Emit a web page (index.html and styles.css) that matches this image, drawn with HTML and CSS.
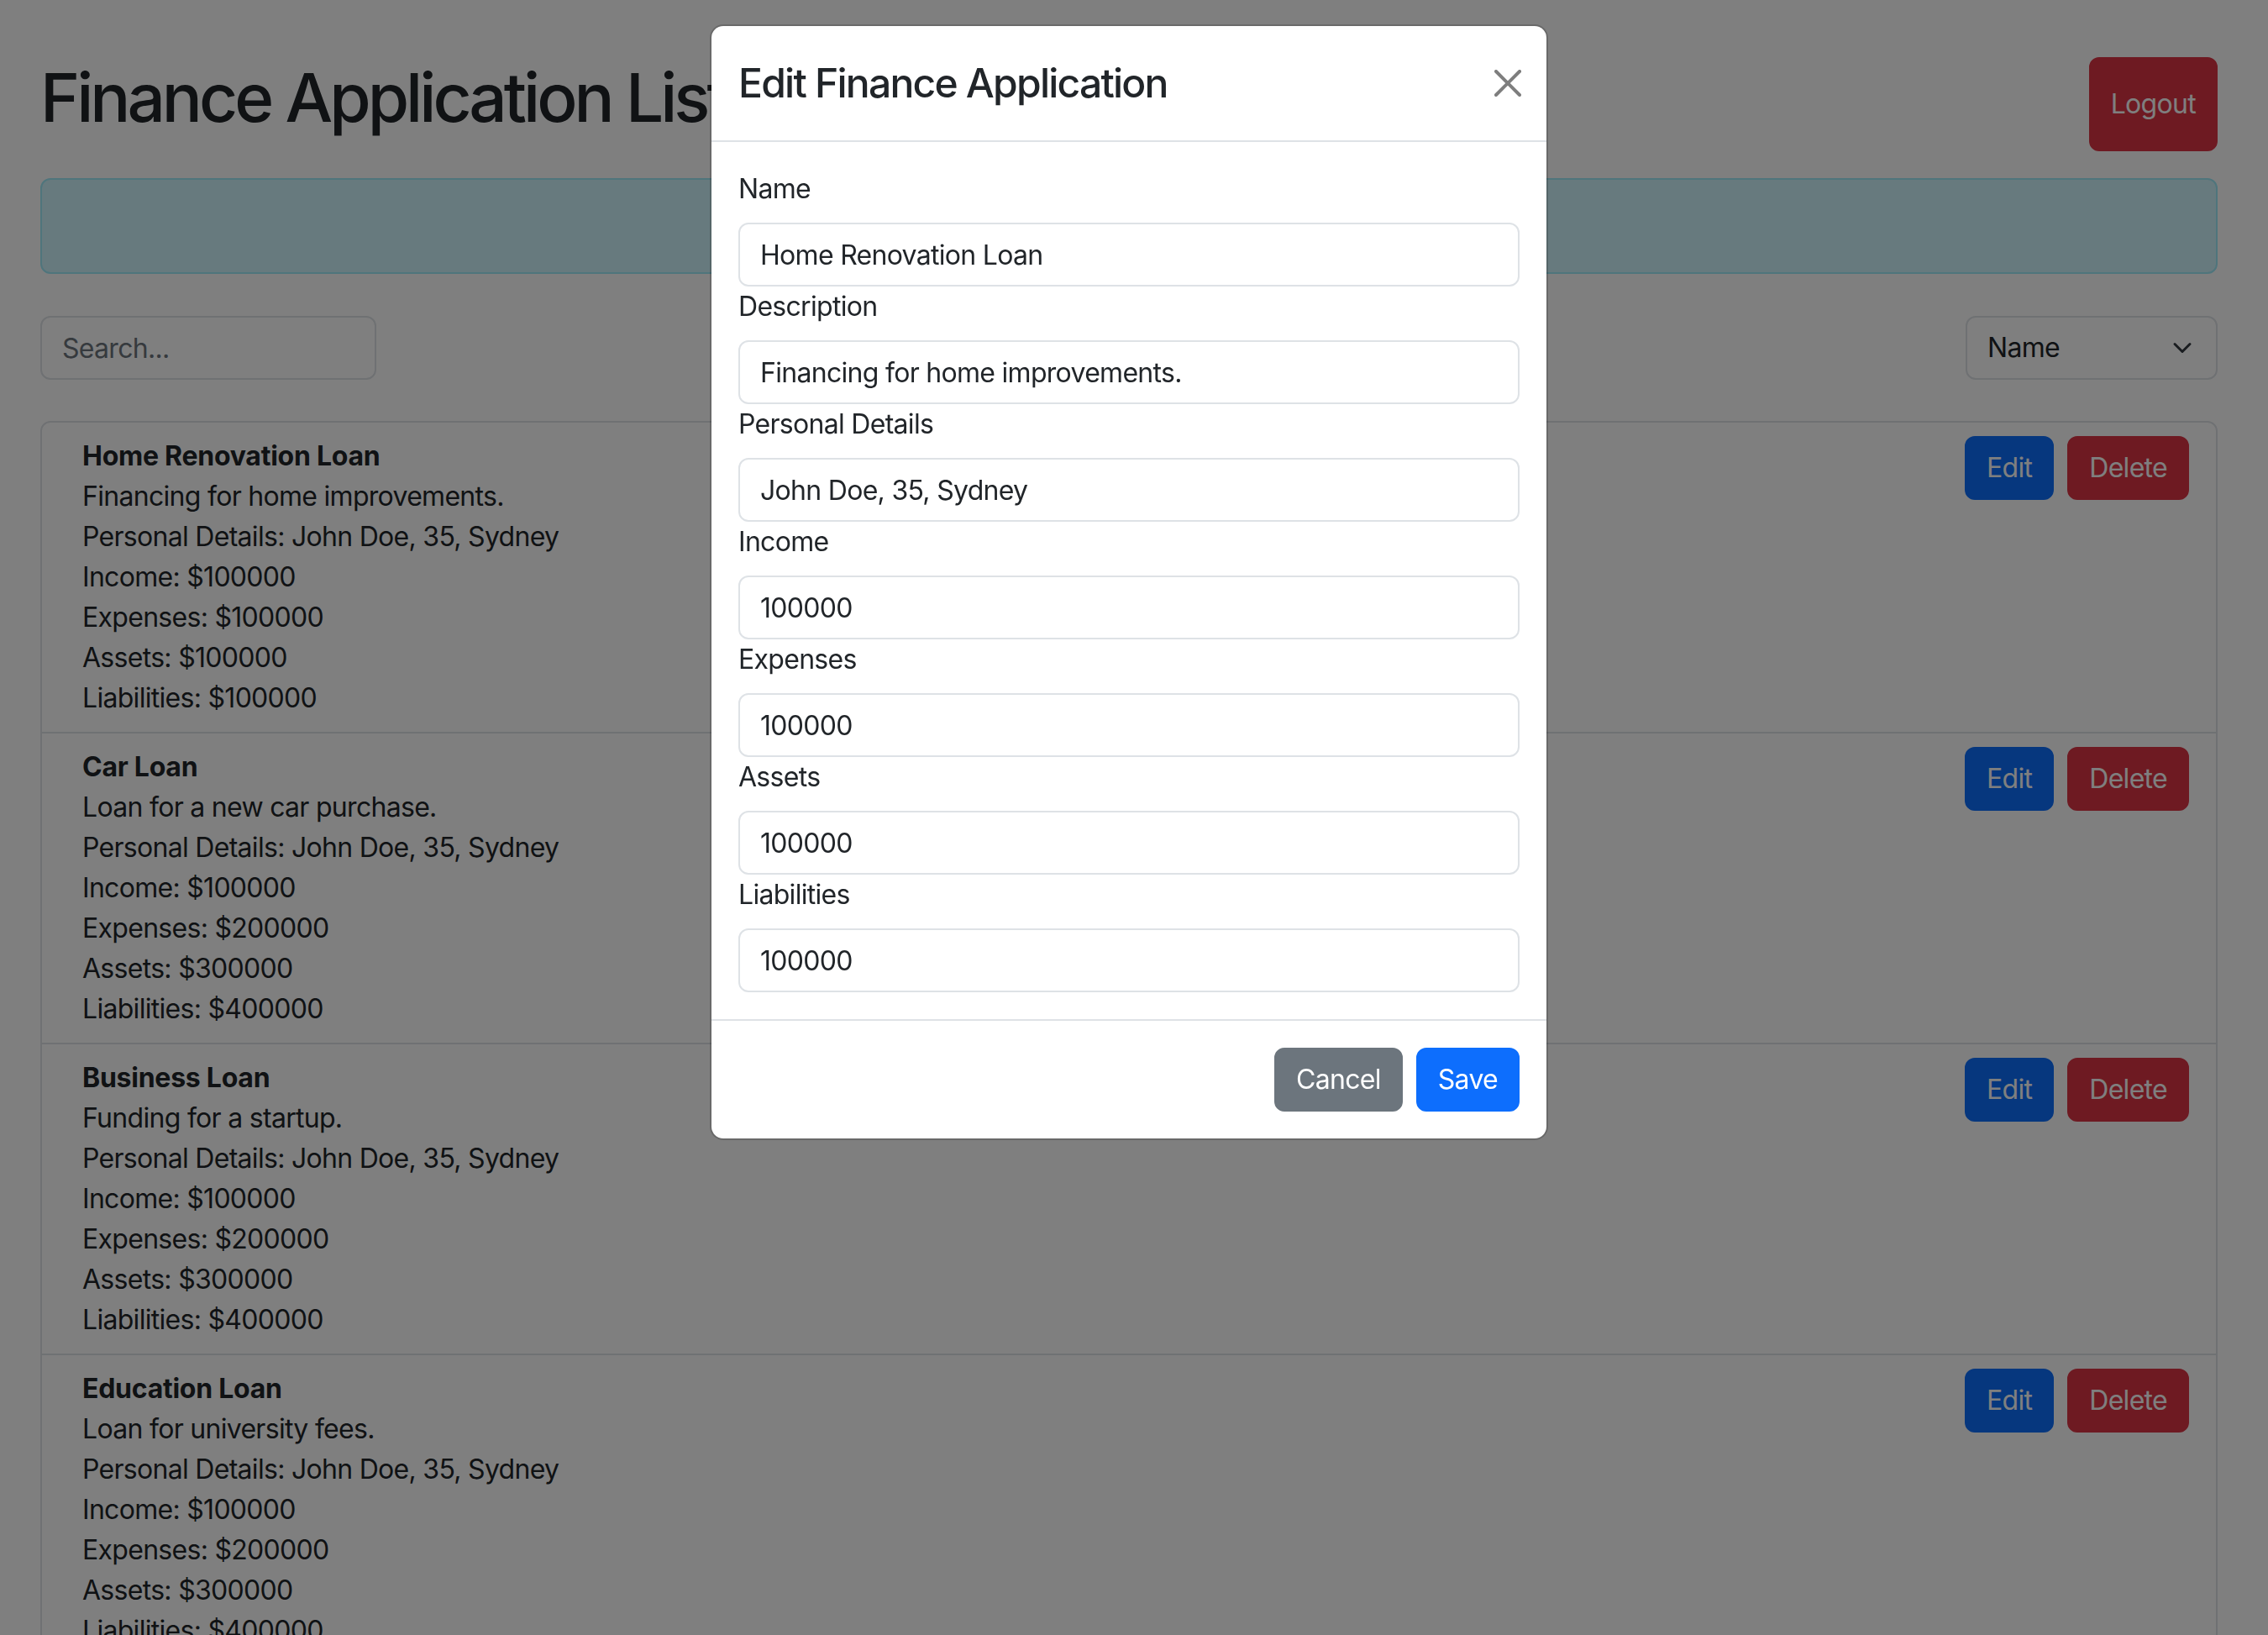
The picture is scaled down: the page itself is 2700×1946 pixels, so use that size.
FILE: index.html
```html
<!DOCTYPE html>
<html lang="en">
<head>
<meta charset="utf-8">
<title>Finance Application List</title>
<link rel="stylesheet" href="styles.css">
</head>
<body class="modal-open">
  <div class="page">
    <header class="topbar">
      <h1 class="page-title">Finance Application List</h1>
      <button class="btn btn-danger">Logout</button>
    </header>

    <div class="alert" role="alert"></div>

    <div class="toolbar">
      <input class="field search" type="text" placeholder="Search...">
      <div class="select-wrap">
        <select class="field select"><option>Name</option></select>
        <svg class="chevron" viewBox="0 0 16 16" width="32" height="24" aria-hidden="true"><path fill="none" stroke="#343a40" stroke-linecap="round" stroke-linejoin="round" stroke-width="2" d="m2 5 6 6 6-6"/></svg>
      </div>
    </div>

    <ul class="list">
      <li class="item">
        <div class="item-body">
          <div class="item-title">Home Renovation Loan</div>
          <div>Financing for home improvements.</div>
          <div>Personal Details: John Doe, 35, Sydney</div>
          <div>Income: $100000</div>
          <div>Expenses: $100000</div>
          <div>Assets: $100000</div>
          <div>Liabilities: $100000</div>
        </div>
        <div class="actions">
          <button class="btn btn-primary">Edit</button>
          <button class="btn btn-danger">Delete</button>
        </div>
      </li>
      <li class="item">
        <div class="item-body">
          <div class="item-title">Car Loan</div>
          <div>Loan for a new car purchase.</div>
          <div>Personal Details: John Doe, 35, Sydney</div>
          <div>Income: $100000</div>
          <div>Expenses: $200000</div>
          <div>Assets: $300000</div>
          <div>Liabilities: $400000</div>
        </div>
        <div class="actions">
          <button class="btn btn-primary">Edit</button>
          <button class="btn btn-danger">Delete</button>
        </div>
      </li>
      <li class="item">
        <div class="item-body">
          <div class="item-title">Business Loan</div>
          <div>Funding for a startup.</div>
          <div>Personal Details: John Doe, 35, Sydney</div>
          <div>Income: $100000</div>
          <div>Expenses: $200000</div>
          <div>Assets: $300000</div>
          <div>Liabilities: $400000</div>
        </div>
        <div class="actions">
          <button class="btn btn-primary">Edit</button>
          <button class="btn btn-danger">Delete</button>
        </div>
      </li>
      <li class="item">
        <div class="item-body">
          <div class="item-title">Education Loan</div>
          <div>Loan for university fees.</div>
          <div>Personal Details: John Doe, 35, Sydney</div>
          <div>Income: $100000</div>
          <div>Expenses: $200000</div>
          <div>Assets: $300000</div>
          <div>Liabilities: $400000</div>
        </div>
        <div class="actions">
          <button class="btn btn-primary">Edit</button>
          <button class="btn btn-danger">Delete</button>
        </div>
      </li>
    </ul>
  </div>

  <div class="backdrop"></div>

  <div class="modal" role="dialog" aria-modal="true">
    <div class="dialog">
      <div class="m-header">
        <h4 class="m-title">Edit Finance Application</h4>
        <button class="close" aria-label="Close">
          <svg viewBox="0 0 16 16" width="32" height="32" aria-hidden="true"><path fill="#000" d="M.293.293a1 1 0 0 1 1.414 0L8 6.586 14.293.293a1 1 0 1 1 1.414 1.414L9.414 8l6.293 6.293a1 1 0 0 1-1.414 1.414L8 9.414l-6.293 6.293a1 1 0 0 1-1.414-1.414L6.586 8 .293 1.707a1 1 0 0 1 0-1.414z"/></svg>
        </button>
      </div>
      <div class="m-body">
        <label class="label">Name</label>
        <input class="field" type="text" value="Home Renovation Loan">
        <label class="label">Description</label>
        <input class="field" type="text" value="Financing for home improvements.">
        <label class="label">Personal Details</label>
        <input class="field" type="text" value="John Doe, 35, Sydney">
        <label class="label">Income</label>
        <input class="field" type="text" value="100000">
        <label class="label">Expenses</label>
        <input class="field" type="text" value="100000">
        <label class="label">Assets</label>
        <input class="field" type="text" value="100000">
        <label class="label">Liabilities</label>
        <input class="field" type="text" value="100000">
      </div>
      <div class="m-footer">
        <button class="btn btn-secondary">Cancel</button>
        <button class="btn btn-primary">Save</button>
      </div>
    </div>
  </div>
</body>
</html>
```

FILE: styles.css
```css
* { box-sizing: border-box; }

html, body { height: 100%; }

body {
  margin: 0;
  padding-right: 12px;
  overflow: hidden;
  background: #fff;
  color: #212529;
  font-family: Inter, "Noto Sans", "Liberation Sans", sans-serif;
  font-size: 32px;
  line-height: 48px;
  letter-spacing: -0.022em;
}

.page {
  max-width: 2640px;
  margin: 0 auto;
  padding: 68px 24px 0;
}

.topbar {
  display: flex;
  justify-content: space-between;
  align-items: stretch;
  margin-bottom: 32px;
}

.page-title {
  margin: 0 0 16px;
  font-size: 80px;
  font-weight: 500;
  line-height: 96px;
  letter-spacing: -0.05em;
  white-space: nowrap;
}

.btn {
  font-family: inherit;
  font-size: 32px;
  line-height: 48px;
  font-weight: 400;
  letter-spacing: -0.022em;
  padding: 12px 24px;
  border: 2px solid transparent;
  border-radius: 12px;
  color: #fff;
  cursor: pointer;
}

.btn-danger { background: #dc3545; border-color: #dc3545; }
.btn-primary { background: #0d6efd; border-color: #0d6efd; }
.btn-secondary { background: #6c757d; border-color: #6c757d; }

.alert {
  height: 114px;
  border: 2px solid #9eeaf9;
  border-radius: 12px;
  background: #cff4fc;
  margin-bottom: 50px;
}

.toolbar {
  display: flex;
  justify-content: space-between;
  align-items: center;
  margin-bottom: 49px;
}

.field {
  display: block;
  width: 100%;
  height: 76px;
  padding: 12px 24px;
  font-family: inherit;
  font-size: 32px;
  line-height: 48px;
  letter-spacing: -0.022em;
  color: #212529;
  background: #fff;
  border: 2px solid #dee2e6;
  border-radius: 12px;
  outline: none;
}

.field::placeholder { color: #6c757d; }

.search { width: 400px; }

.select-wrap {
  position: relative;
  width: 300px;
}

.select {
  appearance: none;
  -webkit-appearance: none;
  padding-right: 72px;
}

.chevron {
  position: absolute;
  right: 26px;
  top: 26px;
  pointer-events: none;
}

.list {
  list-style: none;
  margin: 0;
  padding: 0;
  border: 2px solid #dee2e6;
  border-radius: 12px;
}

.item {
  display: flex;
  justify-content: space-between;
  align-items: flex-start;
  padding: 16px 32px;
}

.item + .item { border-top: 2px solid #dee2e6; }

.item-body {
  margin-left: 16px;
  margin-right: auto;
}

.item-title {
  font-weight: 700;
  letter-spacing: -0.008em;
}

.actions {
  display: flex;
  gap: 16px;
}

.backdrop {
  position: fixed;
  inset: 0;
  background: rgba(0, 0, 0, 0.5);
}

.modal {
  position: fixed;
  inset: 0;
  padding-right: 12px;
}

.dialog {
  width: 998px;
  margin: 29px auto 0;
  background: #fff;
  border: 2px solid rgba(0, 0, 0, 0.175);
  border-radius: 16px;
  background-clip: padding-box;
}

.m-header {
  display: flex;
  align-items: center;
  padding: 32px;
  border-bottom: 2px solid #dee2e6;
}

.m-title {
  margin: 0;
  font-size: 48px;
  line-height: 72px;
  font-weight: 500;
  letter-spacing: -0.037em;
}

.close {
  margin: -16px -10px -16px auto;
  padding: 8px;
  width: 48px;
  height: 48px;
  border: 0;
  background: transparent;
  opacity: 0.5;
  display: flex;
  cursor: pointer;
}

.m-body {
  padding: 32px;
}

.label {
  display: block;
  margin-bottom: 16px;
}

.m-footer {
  display: flex;
  justify-content: flex-end;
  gap: 16px;
  padding: 32px;
  border-top: 2px solid #dee2e6;
}
```
